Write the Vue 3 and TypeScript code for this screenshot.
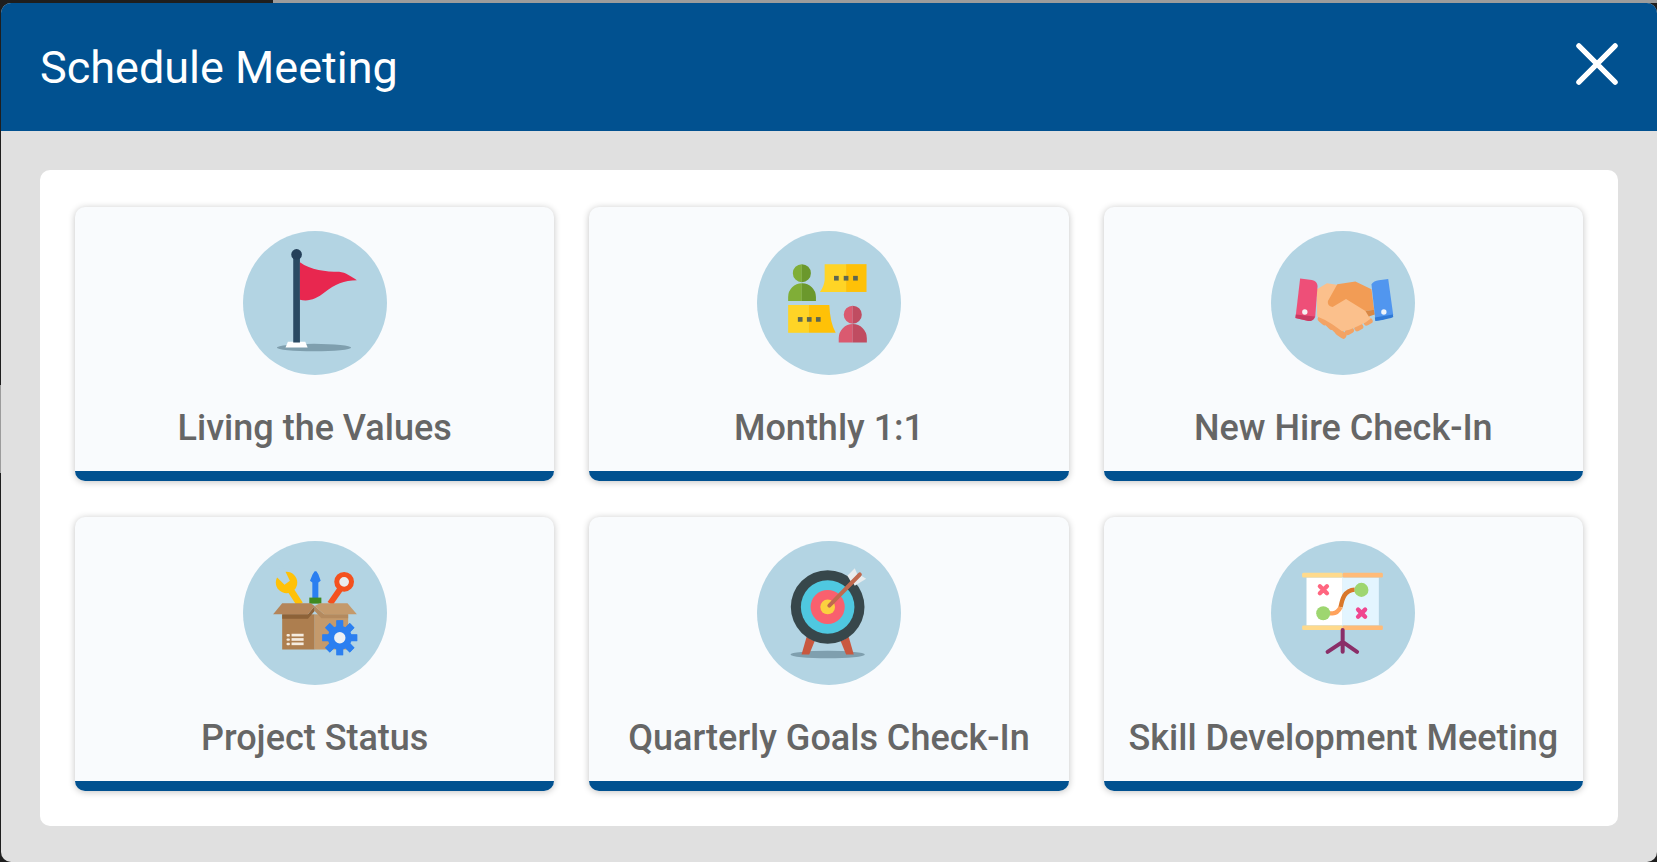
<script setup lang="ts">
const cards: { id: string; label: string }[] = [
  { id: 'flag', label: 'Living the Values' },
  { id: 'chat', label: 'Monthly 1:1' },
  { id: 'hands', label: 'New Hire Check-In' },
  { id: 'box', label: 'Project Status' },
  { id: 'target', label: 'Quarterly Goals Check-In' },
  { id: 'board', label: 'Skill Development Meeting' },
]
const gearTeeth: number[] = [0, 45, 90, 135, 180, 225, 270, 315]
</script>

<template>
  <div class="stage">
    <div class="modal">
      <header class="head">
        <h1 class="title">Schedule Meeting</h1>
        <svg class="close" viewBox="0 0 44 44" aria-label="Close">
          <path d="M3 3 L41 41 M41 3 L3 41" stroke="#fff" stroke-width="5.5" stroke-linecap="round" fill="none" />
        </svg>
      </header>
      <main class="body">
        <section class="panel">
          <article v-for="c in cards" :key="c.id" class="card">
            <svg class="icon" viewBox="38 31 430 430">
              <circle cx="253" cy="246" r="215" fill="#b3d4e3" />
              <g v-if="c.id === 'flag'">
                <ellipse cx="250" cy="379" rx="111" ry="11" fill="#7f9fae" />
                <path d="M165 379 L172 362 H224 L231 379 Z" fill="#fff" />
                <rect x="188" y="102" width="20" height="262" fill="#2a4a63" />
                <circle cx="198" cy="101" r="16" fill="#25405a" />
                <path d="M208 124 C240 148 285 152 325 153 C345 155 362 168 378 178 C340 178 312 190 282 214 C258 234 232 243 208 236 Z" fill="#e8274f" />
              </g>
              <g v-else-if="c.id === 'chat'">
                <path d="M172 130 a27 27 0 0 0 0 54 Z M172 187 a41 41 0 0 0 -41 41 V240 H172 Z" fill="#80ae37" />
                <path d="M172 130 a27 27 0 0 1 0 54 Z M172 187 a41 41 0 0 1 42 41 V240 H172 Z" fill="#6b982c" />
                <path d="M240 130 H304 V213 H226 Q238 197 240 178 Z" fill="#ffd426" />
                <rect x="304" y="130" width="61" height="83" fill="#ffc107" />
                <g fill="#5d6650">
                  <rect x="268" y="165" width="14" height="14" />
                  <rect x="297" y="165" width="14" height="14" />
                  <rect x="325" y="165" width="14" height="14" />
                </g>
                <rect x="131" y="252" width="62" height="83" fill="#ffd426" />
                <path d="M193 252 H254 Q256 305 273 335 H193 Z" fill="#ffc107" />
                <g fill="#5d6650">
                  <rect x="160" y="288" width="14" height="14" />
                  <rect x="187" y="288" width="14" height="14" />
                  <rect x="214" y="288" width="14" height="14" />
                </g>
                <path d="M324 254 a27 27 0 0 0 0 54 Z M324 309 a42 42 0 0 0 -42 42 V364 H324 Z" fill="#da5a70" />
                <path d="M324 254 a27 27 0 0 1 0 54 Z M324 309 a42 42 0 0 1 42 42 V364 H324 Z" fill="#c04c61" />
              </g>
              <g v-else-if="c.id === 'hands'">
                <path d="M180 285 L250 330 L335 295 L300 260 L200 260 Z" fill="#fbc08c" />
                <g fill="#f3a364">
                  <rect x="176" y="288" width="34" height="20" rx="10" transform="rotate(40 193 298)" />
                  <rect x="195" y="300" width="36" height="20" rx="10" transform="rotate(45 213 310)" />
                  <rect x="213" y="313" width="36" height="20" rx="10" transform="rotate(45 231 323)" />
                  <rect x="229" y="328" width="36" height="20" rx="10" transform="rotate(35 247 338)" />
                  <rect x="258" y="322" width="28" height="17" rx="8" transform="rotate(-30 272 330)" />
                  <rect x="286" y="311" width="28" height="17" rx="8" transform="rotate(-30 300 319)" />
                  <rect x="314" y="294" width="28" height="17" rx="8" transform="rotate(-30 328 302)" />
                </g>
                <path d="M174 206 L205 187 L240 192 L300 235 L336 292 L320 304 L295 316 L272 326 L250 330 L222 310 L198 296 L176 286 Z" fill="#fbc08c" />
                <path d="M208 240 L236 190 L290 182 L338 205 L346 266 L320 270 L262 234 L222 258 Q205 255 208 240 Z" fill="#f29c55" />
                <path d="M320 270 L346 266 L348 280 L330 286 Z" fill="#d98744" />
                <path d="M125 173 L160 177 Q176 180 177 195 L170 288 Q165 300 150 300 L111 291 Z" fill="#ee4f78" />
                <path d="M112 280 L169 286 Q165 300 150 300 L111 291 Z" fill="#c93a62" />
                <circle cx="139" cy="273" r="8" fill="#f5f0f2" />
                <path d="M338 190 Q345 179 360 178 L388 174 L403 282 Q395 293 350 300 Z" fill="#5196ef" />
                <path d="M348 289 L402 280 L403 288 Q395 293 350 300 Z" fill="#2f79d6" />
                <circle cx="375" cy="273" r="8" fill="#eef3fa" />
              </g>
              <g v-else-if="c.id === 'box'">
                <path d="M208 220 L172 165" stroke="#ffc107" stroke-width="20" fill="none" />
                <circle cx="168" cy="155" r="32" fill="#ffc107" />
                <path d="M128 128 L156 104 L178 150 L162 162 Z" fill="#b3d4e3" />
                <path d="M246 130 L252 121 H257 L263 130 L270 150 L263 155 V205 H245 V155 L238 150 Z" fill="#2b7ff0" />
                <rect x="236" y="200" width="36" height="18" fill="#3f8a20" />
                <path d="M298 218 L330 172" stroke="#f4511e" stroke-width="18" fill="none" />
                <circle cx="340" cy="153" r="22" fill="#e9eef0" stroke="#f4511e" stroke-width="15" />
                <rect x="155" y="250" width="97" height="105" fill="#ad7e4f" />
                <rect x="252" y="250" width="100" height="105" fill="#c49a6c" />
                <path d="M155 250 H232 L252 225 V240 L232 263 H155 Z" fill="#8d6238" />
                <path d="M252 225 L280 250 H352 V262 H272 L252 240 Z" fill="#b48a5e" />
                <path d="M128 250 L155 217 H240 L252 225 L232 250 Z" fill="#b4855a" />
                <path d="M252 225 L268 217 H350 L378 250 H280 Z" fill="#c49a6c" />
                <g fill="#f5ece0">
                  <rect x="168" y="309" width="10" height="7" rx="3" />
                  <rect x="168" y="322" width="10" height="7" rx="3" />
                  <rect x="168" y="335" width="10" height="7" rx="3" />
                  <rect x="183" y="308" width="36" height="8" />
                  <rect x="183" y="321" width="36" height="8" />
                  <rect x="183" y="334" width="36" height="8" />
                </g>
                <g fill="#2b7ff0">
                  <rect v-for="a in gearTeeth" :key="a" x="317" y="268" width="20" height="104" :transform="`rotate(${a} 327 320)`" />
                  <circle cx="327" cy="320" r="36" />
                </g>
                <circle cx="327" cy="320" r="17" fill="#eef1f3" />
              </g>
              <g v-else-if="c.id === 'target'">
                <ellipse cx="249" cy="370" rx="111" ry="11" fill="#7f9fae" />
                <path d="M186 318 L210 330 L194 370 H171 Z" fill="#c9583f" />
                <path d="M312 318 L288 330 L304 370 H327 Z" fill="#c9583f" />
                <circle cx="249" cy="228" r="110" fill="#37474b" />
                <circle cx="249" cy="228" r="80" fill="#4fc8e0" />
                <circle cx="249" cy="228" r="51" fill="#f9606e" />
                <circle cx="249" cy="228" r="22" fill="#fbd13f" />
                <path d="M308 135 L330 112 L338 132 L318 152 Z" fill="#e8ecee" />
                <path d="M330 165 L364 144 L342 130 L322 152 Z" fill="#e8ecee" />
                <path d="M254 224 L345 131" stroke="#c0694e" stroke-width="12" stroke-linecap="round" fill="none" />
              </g>
              <g v-else>
                <rect x="144" y="140" width="108" height="143" fill="#fff" />
                <rect x="252" y="140" width="108" height="143" fill="#e3f5ff" />
                <rect x="131" y="126" width="121" height="14" rx="4" fill="#ffda8c" />
                <rect x="252" y="126" width="120" height="14" rx="4" fill="#ffbb78" />
                <rect x="131" y="283" width="121" height="14" rx="4" fill="#ffda8c" />
                <rect x="252" y="283" width="120" height="14" rx="4" fill="#ffbb78" />
                <path d="M252 297 V362 M252 332 L207 362 M252 332 L295 362" stroke="#8a2e68" stroke-width="12" stroke-linecap="round" fill="none" />
                <path d="M184 166 L205 187 M205 166 L184 187" stroke="#ff6680" stroke-width="13" stroke-linecap="round" />
                <path d="M298 236 L319 257 M319 236 L298 257" stroke="#f0468f" stroke-width="13" stroke-linecap="round" />
                <path d="M214 247 H222 C232 247 240 240 246 228" stroke="#ffa25c" stroke-width="13" fill="none" />
                <path d="M246 228 C250 210 254 178 288 176" stroke="#d9772a" stroke-width="13" fill="none" />
                <circle cx="194" cy="247" r="21" fill="#9ed670" />
                <circle cx="308" cy="177" r="21" fill="#9ed670" />
              </g>
            </svg>
            <div class="label">{{ c.label }}</div>
            <div class="bar"></div>
          </article>
        </section>
      </main>
    </div>
  </div>
</template>

<style scoped>
.stage {
  width: 1657px;
  height: 862px;
  box-sizing: border-box;
  padding: 3px 0 0 1px;
  overflow: hidden;
  background:
    linear-gradient(90deg, #1e1e1e 273px, #9c9c9c 273px) top left / 100% 3px no-repeat,
    linear-gradient(180deg, #1e1e1e 385px, #9c9c9c 385px, #9c9c9c 473px, #1e1e1e 473px);
}
.modal {
  height: 100%;
  display: flex;
  flex-direction: column;
  border-radius: 10px;
  overflow: hidden;
  background: #e0e0e0;
  font-family: Roboto, sans-serif;
}
.head {
  height: 128px;
  flex: none;
  display: flex;
  align-items: center;
  justify-content: space-between;
  padding: 1px 39px 0 39px;
  box-sizing: border-box;
  background: #015190;
}
.title {
  margin: 0;
  font-size: 45px;
  font-weight: 400;
  color: #fff;
}
.close {
  width: 42px;
  height: 42px;
  margin-bottom: 8px;
}
.body {
  flex: 1;
  padding: 39px 39px 0;
}
.panel {
  display: grid;
  grid-template-columns: repeat(3, 1fr);
  column-gap: 35px;
  row-gap: 36px;
  padding: 37px 35px 35px;
  background: #fff;
  border-radius: 10px;
}
.card {
  height: 274px;
  display: flex;
  flex-direction: column;
  align-items: center;
  background: #f9fbfd;
  border-radius: 10px;
  overflow: hidden;
  box-shadow: 0 1px 7px rgba(0, 0, 0, 0.24);
}
.icon {
  width: 144px;
  height: 144px;
  margin-top: 24px;
  flex: none;
}
.label {
  flex: 1;
  display: flex;
  align-items: center;
  padding-top: 10px;
  font-size: 36px;
  font-weight: 500;
  color: #666;
  white-space: nowrap;
}
.bar {
  width: 100%;
  height: 10px;
  flex: none;
  background: #015190;
}
</style>

<style>
html, body { margin: 0; background: #1e1e1e; }
</style>
